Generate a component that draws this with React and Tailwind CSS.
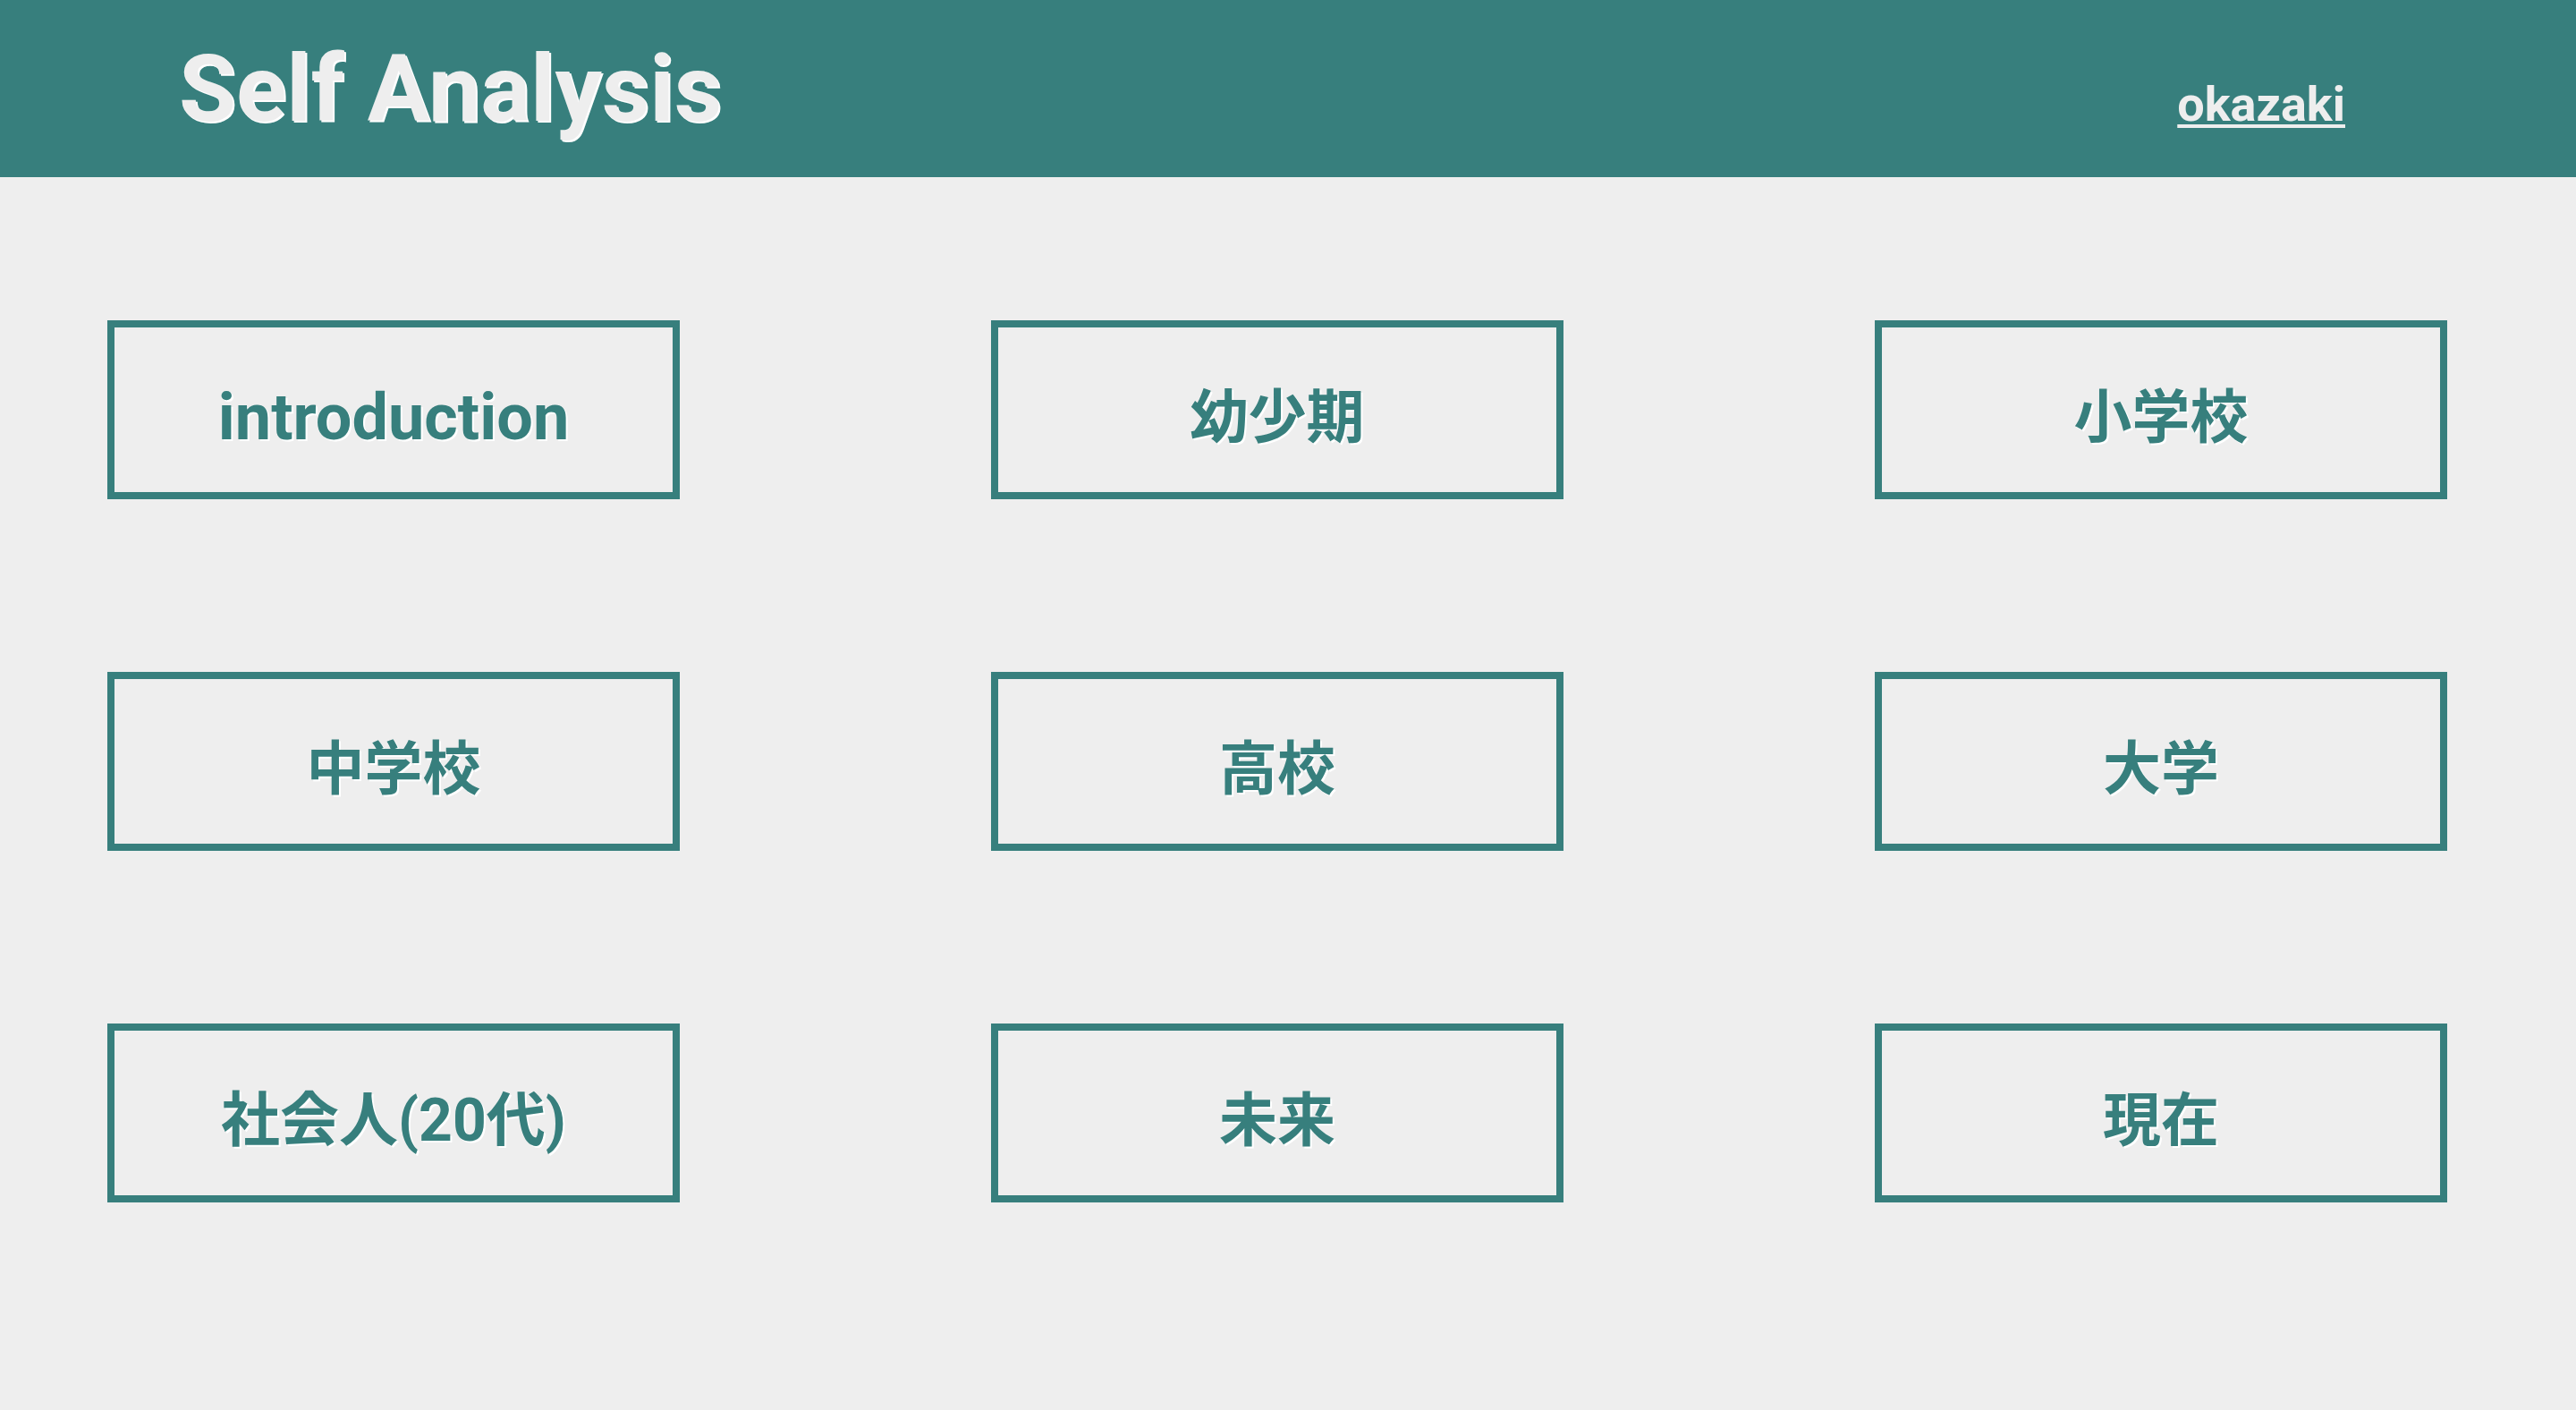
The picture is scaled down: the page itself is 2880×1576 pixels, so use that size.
export default function App() {
  const items = [
    { label: "introduction", size: "text-[72px]" },
    { label: "幼少期", size: "text-[65px]" },
    { label: "小学校", size: "text-[65px]" },
    { label: "中学校", size: "text-[65px]" },
    { label: "高校", size: "text-[65px]" },
    { label: "大学", size: "text-[65px]" },
    { label: "社会人(20代)", size: "text-[66px]" },
    { label: "未来", size: "text-[65px]" },
    { label: "現在", size: "text-[65px]" },
  ];
  return (
    <div className="min-h-[1576px] bg-[#eeeeee] font-['Roboto','Noto_Sans_CJK_JP',sans-serif]">
      <header className="h-[198px] bg-[#377f7d] flex items-baseline pt-[48px] pl-[200px] pr-[258px]">
        <h1 className="text-[104px] leading-none font-bold text-[#eeeeee] [text-shadow:2px_2px_0_#ffffff]">
          Self Analysis
        </h1>
        <a className="ml-auto mt-[2px] text-[54px] leading-none font-bold text-[#eeeeee] underline decoration-4 underline-offset-[4px]">
          okazaki
        </a>
      </header>
      <main className="pt-[160px] pl-[120px]">
        <div className="grid grid-cols-[repeat(3,640px)] gap-x-[348px] gap-y-[193px]">
          {items.map((it) => (
            <div
              key={it.label}
              className="h-[200px] border-[8px] border-[#377f7d] flex items-center justify-center pt-[18px]"
            >
              <span
                className={`${it.size} leading-none font-bold text-[#377f7d] [text-shadow:2px_2px_0_#ffffff]`}
              >
                {it.label}
              </span>
            </div>
          ))}
        </div>
      </main>
    </div>
  );
}
